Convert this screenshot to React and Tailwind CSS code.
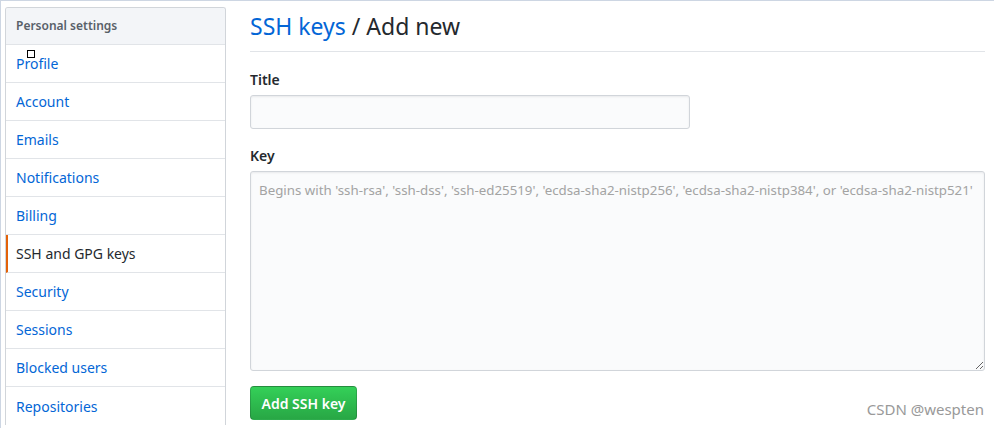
import React from "react";

const items = [
  "Profile",
  "Account",
  "Emails",
  "Notifications",
  "Billing",
  "SSH and GPG keys",
  "Security",
  "Sessions",
  "Blocked users",
  "Repositories",
];

export default function App() {
  return (
    <div
      className="relative w-[994px] h-[428px] overflow-hidden bg-white border-t border-l border-[#cdd6e3] text-[14px] text-[#24292e]"
      style={{ fontFamily: '"Noto Sans", "Open Sans", sans-serif' }}
    >
      <div className="flex gap-6 pl-1">
        <nav className="w-[221px] mt-[6px] shrink-0 border-x border-t border-[#d1d5da] rounded-t-[3px] overflow-hidden">
          <div className="h-[37px] flex items-center px-[10px] bg-[#f3f5f8] border-b border-[#e1e4e8] font-semibold text-[#586069] text-[12px]">
            Personal settings
          </div>
          {items.map((it, i) => {
            const active = it === "SSH and GPG keys";
            return (
              <div
                key={it}
                className={
                  "h-[38px] flex items-center pr-[10px] " +
                  (i < items.length - 1 ? "border-b border-[#e1e4e8] " : "") +
                  (active
                    ? "border-l-2 border-l-[#e36209] pl-[8px] text-[#24292e]"
                    : "pl-[10px] text-[#0366d6]")
                }
              >
                {it}
              </div>
            );
          })}
        </nav>
        <main className="w-[735px] shrink-0">
          <div className="mt-[10px] pb-[10px] border-b border-[#e1e4e8] text-[23px] leading-[30px]">
            <span className="text-[#0366d6]">SSH keys</span>
            <span> / Add new</span>
          </div>
          <div className="mt-[17px] font-semibold leading-[21px]">Title</div>
          <input
            className="mt-[5px] block w-[440px] h-[34px] bg-[#fafbfc] border border-[#d1d5da] rounded-[3px] shadow-[inset_0_1px_2px_rgba(27,31,35,0.075)] px-2 outline-none"
          />
          <div className="mt-[16px] font-semibold leading-[21px]">Key</div>
          <textarea
            className="mt-[5px] block w-[735px] h-[200px] bg-[#fafbfc] border border-[#d1d5da] rounded-[3px] shadow-[inset_0_1px_2px_rgba(27,31,35,0.075)] pl-2 pr-0 py-[8px] text-[13.3px] leading-[20px] outline-none placeholder:text-[#a3a3a3] resize-y"
            placeholder="Begins with 'ssh-rsa', 'ssh-dss', 'ssh-ed25519', 'ecdsa-sha2-nistp256', 'ecdsa-sha2-nistp384', or 'ecdsa-sha2-nistp521'"
          />
          <button className="mt-[15px] h-[34px] w-[107px] rounded-[4px] border border-[rgba(27,31,35,0.2)] bg-gradient-to-b from-[#34d058] to-[#28a745] text-white font-semibold text-[14px]">
            Add SSH key
          </button>
        </main>
      </div>
      <div className="absolute left-[26px] top-[49px] w-[8px] h-[8px] border border-black bg-white" />
      <div className="absolute right-[10px] bottom-[8px] text-[15px] text-[#999]">CSDN @wespten</div>
    </div>
  );
}
